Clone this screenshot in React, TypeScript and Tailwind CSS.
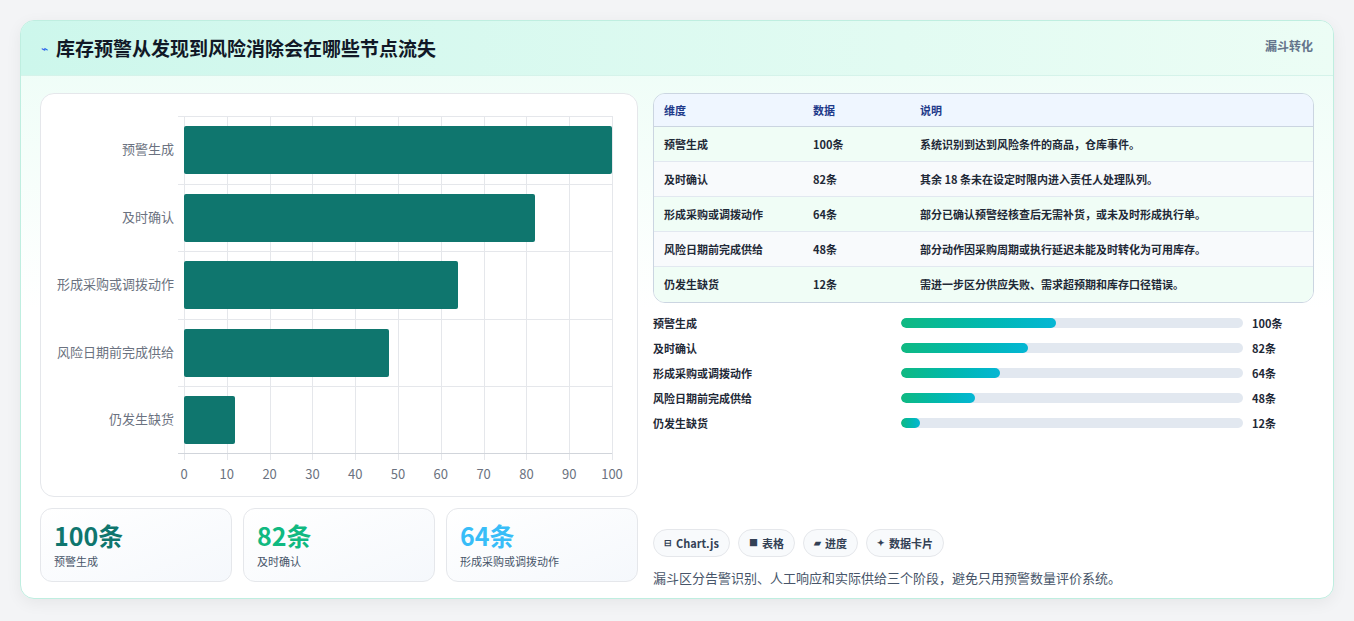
export default function App() {
  const rows = [
    ["预警生成", 100, "系统识别到达到风险条件的商品，仓库事件。"],
    ["及时确认", 82, "其余 18 条未在设定时限内进入责任人处理队列。"],
    ["形成采购或调拨动作", 64, "部分已确认预警经核查后无需补货，或未及时形成执行单。"],
    ["风险日期前完成供给", 48, "部分动作因采购周期或执行延迟未能及时转化为可用库存。"],
    ["仍发生缺货", 12, "需进一步区分供应失败、需求超预期和库存口径错误。"],
  ] as const;
  const ticks = [0, 10, 20, 30, 40, 50, 60, 70, 80, 90, 100];
  const plotW = 428, plotH = 338;
  return (
    <div className="w-[1354px] h-[621px] bg-[#f3f4f6] pt-[20px] px-[20px]" style={{ fontFamily: '"Noto Sans CJK SC", "Noto Sans", sans-serif' }}>
      <div className="h-[579px] rounded-[14px] border border-[#bfeee0] bg-gradient-to-b from-[#ecfdf6] via-white to-white shadow-[0_4px_16px_rgba(0,0,0,0.06)] overflow-hidden">
        <div className="h-[55px] flex items-center justify-between pl-[20px] pr-[20px] bg-gradient-to-r from-[#cdf7ec] to-[#ecfdf5] border-b border-[#d5f3ea]">
          <div className="flex items-center gap-[8px]">
            <span className="text-[#2563eb] text-[12px]">⌁</span>
            <span className="text-[19px] font-bold text-[#111827]">库存预警从发现到风险消除会在哪些节点流失</span>
          </div>
          <span className="text-[12px] font-bold text-[#64748b] self-start mt-[16px]">漏斗转化</span>
        </div>
        <div className="flex gap-[15px] px-[19px] pt-[17px]">
          <div className="w-[598px] flex flex-col gap-[11px]">
            <div className="h-[404px] rounded-[14px] border border-[#e5e7eb] bg-white relative">
              <div className="absolute left-[143px] top-[22px]" style={{ width: plotW, height: plotH }}>
                {ticks.map((t) => (
                  <div key={t} className="absolute top-0 bottom-[-6px] w-px bg-[#e5e7eb]" style={{ left: (t / 100) * plotW }} />
                ))}
                {[1, 2, 3, 4].map((i) => (
                  <div key={i} className="absolute left-[-6px] right-0 h-px bg-[#e5e7eb]" style={{ top: (i * plotH) / 5 }} />
                ))}
                <div className="absolute left-[-6px] right-0 h-px bg-[#e5e7eb] top-0" />
                <div className="absolute left-[-6px] right-0 h-px bg-[#d1d5db] bottom-0" />
                {rows.map(([l, v], i) => (
                  <div key={l}>
                    <div className="absolute bg-[#0f766e] rounded-[2px]" style={{ left: 0, top: (i * plotH) / 5 + 10, height: 48, width: (v / 100) * plotW }} />
                    <div className="absolute right-[438px] text-[13px] text-[#6b7280] whitespace-nowrap" style={{ top: (i * plotH) / 5 + 23 }}>{l}</div>
                  </div>
                ))}
                {ticks.map((t) => (
                  <div key={t} className="absolute text-[13px] text-[#6b7280] -translate-x-1/2" style={{ left: (t / 100) * plotW, top: plotH + 10 }}>{t}</div>
                ))}
              </div>
            </div>
            <div className="flex gap-[11px]">
              {[["100条", "预警生成", "text-[#0f766e]"], ["82条", "及时确认", "text-[#10b981]"], ["64条", "形成采购或调拨动作", "text-[#38bdf8]"]].map(([v, l, c]) => (
                <div key={l} className="w-[192px] h-[74px] rounded-[12px] border border-[#e5e7eb] bg-gradient-to-br from-white to-[#f5f8fc] px-[13px] pt-[10px]">
                  <div className={`text-[25px] font-bold leading-[32px] ${c}`}>{v}</div>
                  <div className="text-[11px] text-[#475569] mt-[2px]">{l}</div>
                </div>
              ))}
            </div>
          </div>
          <div className="flex-1 flex flex-col">
            <div className="rounded-[12px] border border-[#cbd5e1] overflow-hidden">
              <div className="h-[33px] bg-[#eff6ff] flex items-center text-[11px] font-bold text-[#1e3a8a] border-b border-[#cbd5e1]">
                <div className="w-[159px] pl-[10px]">维度</div>
                <div className="w-[107px]">数据</div>
                <div>说明</div>
              </div>
              {rows.map(([l, v, d], i) => (
                <div key={l} className={`h-[35px] flex items-center text-[11px] font-bold text-[#1f2937] ${i < 4 ? "border-b border-[#e2e8f0]" : ""} ${i % 2 ? "bg-[#f8fafc]" : "bg-[#f0fdf6]"}`}>
                  <div className="w-[159px] pl-[10px]">{l}</div>
                  <div className="w-[107px]">{v}条</div>
                  <div>{d}</div>
                </div>
              ))}
            </div>
            <div className="flex flex-col gap-[9px] mt-[12px]">
              {rows.map(([l, v]) => (
                <div key={l} className="flex items-center h-[16px] text-[11px] font-bold text-[#1f2937]">
                  <div className="w-[248px]">{l}</div>
                  <div className="w-[342px] h-[10px] rounded-full bg-[#e2e8f0] overflow-hidden">
                    <div className="h-full rounded-full bg-gradient-to-r from-[#10b981] to-[#06b6d4]" style={{ width: (v / 100) * 155 }} />
                  </div>
                  <div className="ml-[9px]">{v}条</div>
                </div>
              ))}
            </div>
            <div className="flex gap-[8px] mt-[98px]">
              {[["⊟", "Chart.js"], ["■", "表格"], ["▰", "进度"], ["✦", "数据卡片"]].map(([ic, t]) => (
                <div key={t} className="h-[28px] px-[10px] rounded-full border border-[#e5e7eb] bg-[#f8fafc] flex items-center gap-[4px] text-[11px] font-bold text-[#334155]">
                  <span className="text-[9px]">{ic}</span>{t}
                </div>
              ))}
            </div>
            <div className="mt-[11px] text-[13px] text-[#475569]">漏斗区分告警识别、人工响应和实际供给三个阶段，避免只用预警数量评价系统。</div>
          </div>
        </div>
      </div>
    </div>
  );
}
